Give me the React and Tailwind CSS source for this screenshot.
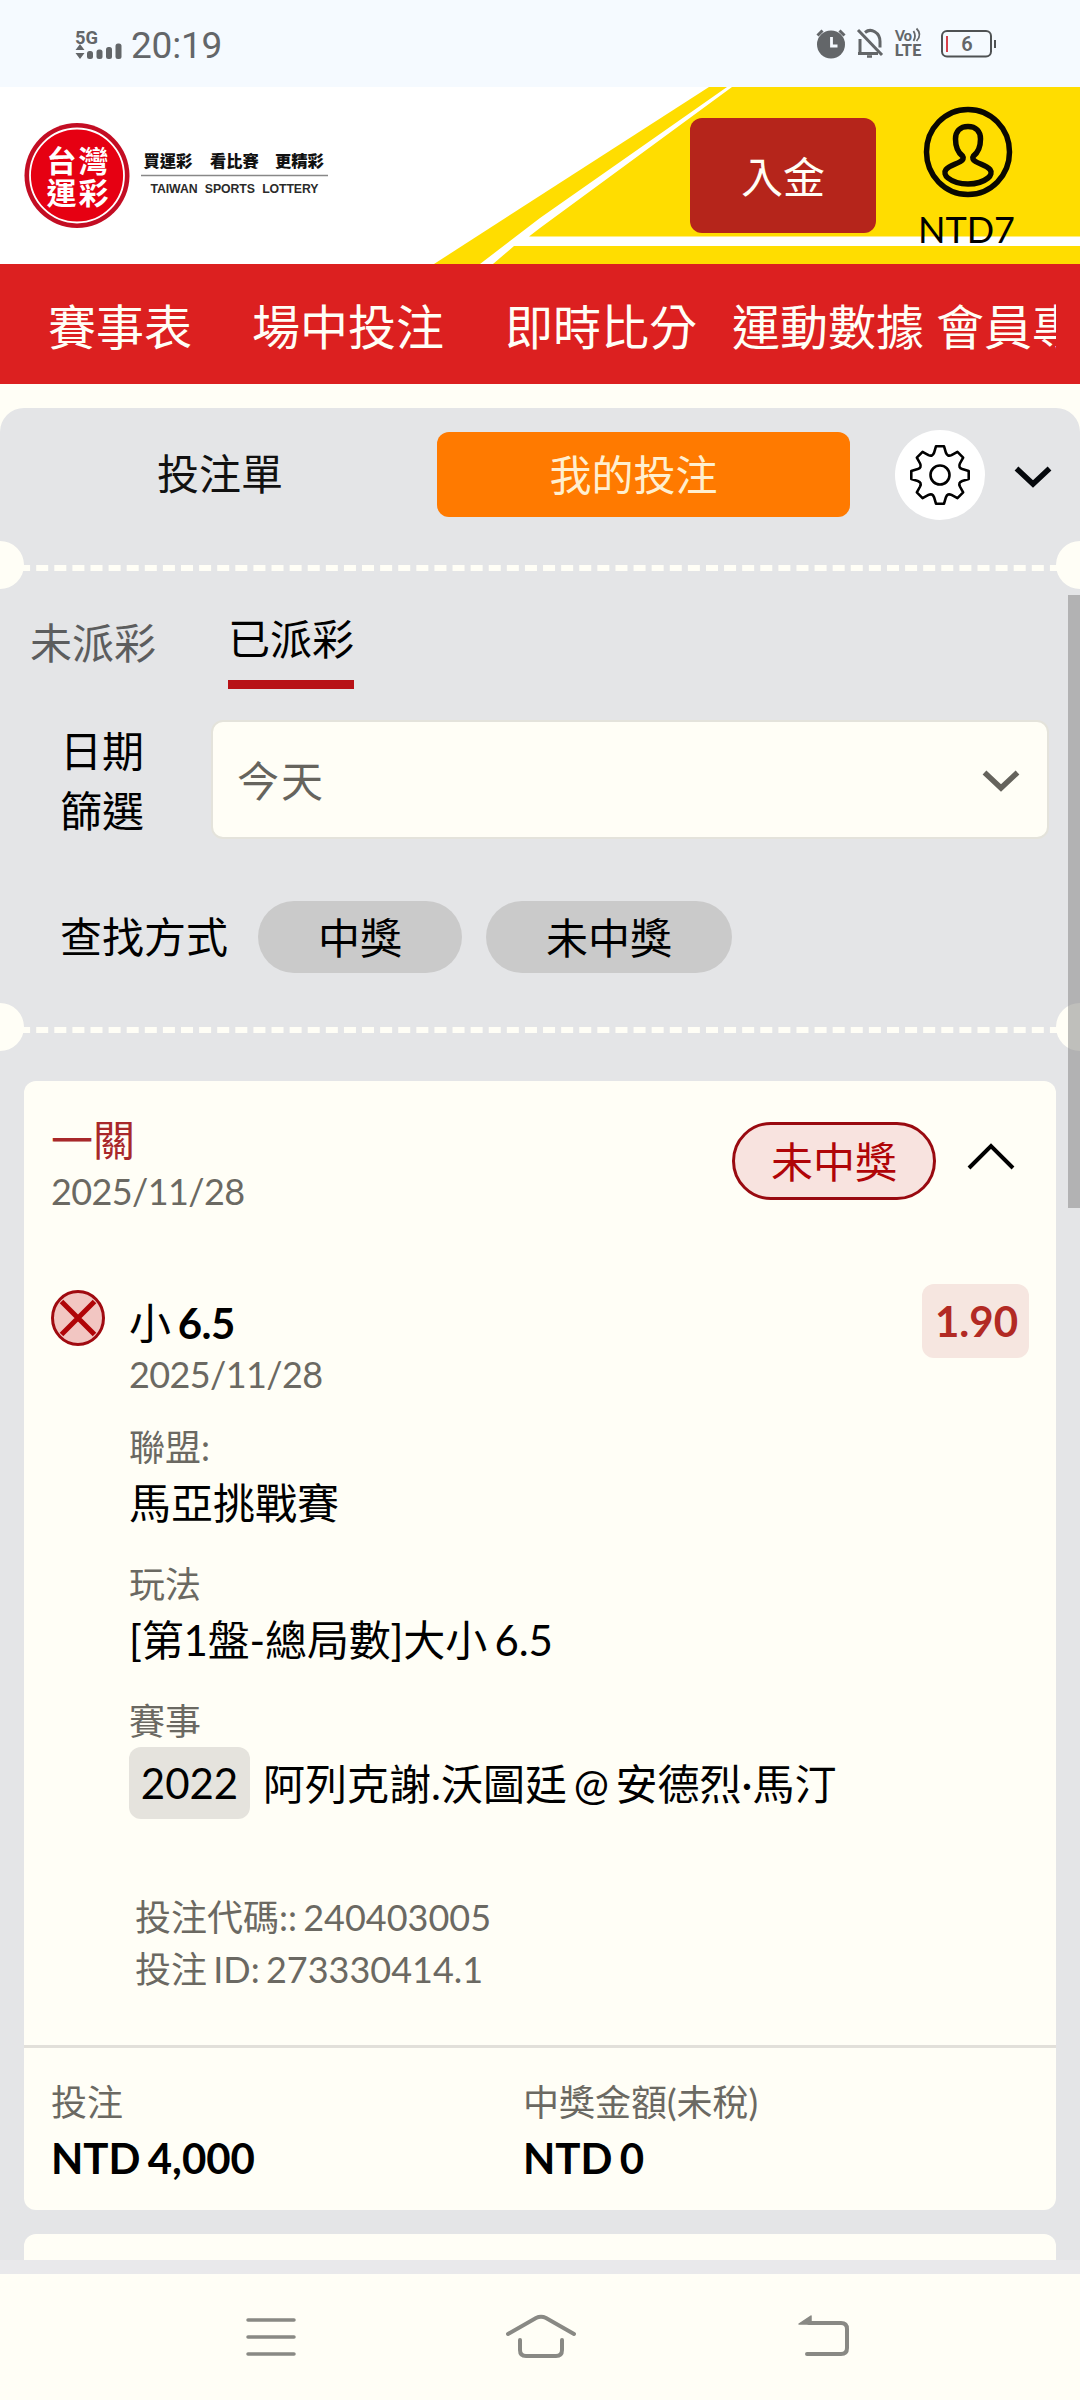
import React from "react";

function SignalIcon() {
  return (
    <svg width="48" height="34" viewBox="0 -2 48 34" className="shrink-0" fill="#636669">
      <text x="0" y="14.5" fontFamily="Roboto" fontWeight="700" fontSize="18.5" textLength="23" lengthAdjust="spacingAndGlyphs">5G</text>
      <path d="M5 15l4.5 6h-9zM5 30l4.5-6h-9z" />
      <rect x="12" y="22" width="6" height="8" rx="2.5" />
      <rect x="21.5" y="20.5" width="6" height="9.5" rx="2.5" />
      <rect x="31" y="18" width="6" height="12" rx="2.5" />
      <rect x="40.5" y="14.5" width="6" height="15.5" rx="2.5" />
    </svg>
  );
}

function StatusIcons() {
  return (
    <svg width="182" height="34" viewBox="0 0 182 34" className="shrink-0">
      <g transform="translate(0 1)">
        <circle cx="15" cy="16.5" r="14" fill="#636669" />
        <path d="M15.5 9v9h6" fill="none" stroke="#f5faff" strokeWidth="2.8" />
        <path d="M1.5 7.5l5-5M28.500 7.500l-5-5" stroke="#636669" strokeWidth="3" />
      </g>
      <g fill="none" stroke="#636669" strokeWidth="3">
        <path d="M42 3l24 25" />
        <path d="M44 12v14M42 26.500h20" />
        <path d="M49 5.500c6-5 15 0 15 9v6" />
        <path d="M51 29.500h5" strokeWidth="2.5" />
      </g>
      <g fill="#636669" fontFamily="Lato" fontWeight="900">
        <text x="79" y="14" fontSize="14.5" textLength="17" lengthAdjust="spacingAndGlyphs">Vo</text>
        <text x="78.500" y="29" fontSize="16.500" textLength="27" lengthAdjust="spacingAndGlyphs">LTE</text>
      </g>
      <path d="M97.500 4q3 5 0 10M100.500 1.500q6 6 0 12.500" fill="none" stroke="#636669" strokeWidth="1.8" />
      <rect x="126" y="4" width="49" height="25.500" rx="5" fill="none" stroke="#4f5254" strokeWidth="2" />
      <path d="M179 13v8" stroke="#4f5254" strokeWidth="2" />
      <path d="M131 9v16" stroke="#d8404a" strokeWidth="2" />
      <text x="151" y="24" textAnchor="middle" fontFamily="Roboto" fontWeight="600" fontSize="20" fill="#636669">6</text>
    </svg>
  );
}

function Logo() {
  return (
    <svg width="310" height="112" viewBox="0 0 310 112" className="shrink-0">
      <ellipse cx="53" cy="54.500" rx="52.500" ry="52.500" fill="#c30d23" />
      <circle cx="53" cy="54.500" r="47" fill="#e60012" stroke="#fff" strokeWidth="1.8" />
      <g fill="#fff" fontFamily="'Noto Sans CJK TC'" fontWeight="700" fontSize="30" letterSpacing="2">
        <text x="22.500" y="50.500">台灣</text>
        <text x="22.500" y="83">運彩</text>
      </g>
      <g fill="#111" fontFamily="'Noto Sans CJK TC'" fontWeight="900" fontSize="16.300">
        <text x="119.500" y="46">買運彩</text>
        <text x="186" y="46">看比賽</text>
        <text x="251" y="46">更精彩</text>
      </g>
      <path d="M117 54.500h187" stroke="#888" strokeWidth="1.500" />
      <text x="126.500" y="71.500" fontFamily="'Liberation Sans'" fontWeight="700" fontSize="12.300" fill="#2a2a2a" wordSpacing="4" textLength="168">TAIWAN SPORTS LOTTERY</text>
    </svg>
  );
}

function HeaderBackdrop() {
  return (
    <svg width="1080" height="177" viewBox="0 0 1080 177" className="absolute inset-0">
      <path d="M709 0H1080V177H434z" fill="#ffdd00" />
      <path d="M727 0L540 131L480 177H493L514 159H1080V149.500H529L540 141L732 0z" fill="#fff" />
    </svg>
  );
}

function UserIcon() {
  return (
    <svg width="90" height="92" viewBox="0 0 90 92" fill="none" stroke="#0a0800" strokeWidth="5.500">
      <ellipse cx="45" cy="46" rx="41.500" ry="42.500" />
      <path d="M45 20.500c-8 0-12.500 5-12.500 12.500 0 8 2 13 7 17 1.500 2 .5 4-2 5.500-5 3-11 4-14.500 8-2 2.500-1 6 2 8.500 5 4 12 6 20 6s15-2 20-6c3-2.500 4-6 2-8.500-3.500-4-9.500-5-14.500-8-2.500-1.500-3.500-3.500-2-5.500 5-4 7-9 7-17 0-7.500-4.500-12.500-12.500-12.500z" />
    </svg>
  );
}

const polar = (deg, r) => {
  const a = ((deg - 90) * Math.PI) / 180;
  return `${(32 + r * Math.cos(a)).toFixed(2)} ${(32 + r * Math.sin(a)).toFixed(2)}`;
};

const gearPath =
  Array.from({ length: 8 }, (_, k) => {
    const c = k * 45;
    return `${k === 0 ? "M" : "L"}${polar(c - 8, 29)}L${polar(c + 8, 29)}L${polar(c + 15, 23)}Q${polar(c + 22.5, 19.5)} ${polar(c + 30, 23)}`;
  }).join("") + "Z";

function GearIcon() {
  return (
    <svg width="64" height="64" viewBox="0 0 64 64" fill="none" stroke="#000" strokeWidth="2.600" strokeLinejoin="round">
      <path d={gearPath} />
      <circle cx="32" cy="32" r="9.500" />
    </svg>
  );
}

function ChevronDown({ color }) {
  return (
    <svg width="38" height="24" viewBox="0 0 38 24" fill="none" stroke={color} strokeWidth="5.500" className="shrink-0">
      <path d="M2.500 3.500L19 19L35.500 3.500" />
    </svg>
  );
}

function Perforation() {
  return (
    <div className="relative h-[6px]">
      <div className="border-t-[6px] border-dashed border-[#fffef6]" />
      <div className="absolute -left-6 -top-6 size-12 rounded-full bg-[#fffef6]" />
      <div className="absolute -right-6 -top-6 size-12 rounded-full bg-[#fffef6]" />
    </div>
  );
}

function Field({ label, children }) {
  return (
    <div className="mb-[26px]">
      <div className="h-[56px] text-[36px] leading-[54px] text-[#6b6962]">{label}</div>
      <div className="flex h-[55px] items-center text-[42px] leading-[55px]">{children}</div>
    </div>
  );
}

function BetCard() {
  return (
    <article className="mx-6 h-[1129px] rounded-[12px] bg-[#fffef6] [word-spacing:-3px]">
      <header className="flex h-[192px] justify-between pl-[27px] pr-[41px]">
        <div className="pt-[29px]">
          <div className="text-[42px] leading-[60px] text-[#a8282a]">一關</div>
          <div className="text-[36px] leading-[42px] tracking-[-0.6px] text-[#6b6962]">2025/11/28</div>
        </div>
        <div className="mt-[41px] flex h-[78px] items-center gap-[31px]">
          <div className="flex h-[78px] w-[204px] items-center justify-center rounded-full border-[3px] border-[#990a10] bg-[#f8e3df] pt-[2px] text-[42px] leading-none text-[#b00508]">未中獎</div>
          <svg width="48" height="30" viewBox="0 0 48 30" fill="none" stroke="#000" strokeWidth="4" className="mb-[10px]">
            <path d="M2 27L24 5L46 27" />
          </svg>
        </div>
      </header>

      <div className="flex h-[772px] pl-[27px] pr-[27px]">
        <svg width="54" height="56" viewBox="0 0 54 56" className="mt-[17px] shrink-0">
          <ellipse cx="27" cy="28" rx="25.500" ry="26.500" fill="#f2c6c2" stroke="#a00a10" strokeWidth="3" />
          <path d="M10.500 11.500L43.500 44.500M43.500 11.500L10.500 44.500" stroke="#b00508" strokeWidth="5" />
        </svg>
        <div className="ml-[24px] flex-1 pt-[20px]">
          <div className="text-[42px] leading-[60px]">小<span className="font-bold tracking-[-0.5px]"> 6.5</span></div>
          <div className="h-[45px] text-[36px] leading-[43px] tracking-[-0.6px] text-[#6b6962]">2025/11/28</div>
          <div className="h-[22px]" />
          <Field label="聯盟:">馬亞挑戰賽</Field>
          <Field label="玩法"><span className="whitespace-nowrap tracking-[-0.15px]">[第1盤-總局數]大小 6.5</span></Field>
          <div className="h-[54px] text-[36px] leading-[54px] text-[#6b6962]">賽事</div>
          <div className="-mt-[1px] flex h-[72px] items-center text-[42px]">
            <span className="mr-[13px] flex h-[72px] w-[121px] items-center justify-center rounded-[12px] bg-[#e5e3dd] leading-none">2022</span>
            <span className="whitespace-nowrap leading-[72px] [word-spacing:-4px] pt-[2px]">阿列克謝.沃圖廷 @ 安德烈·馬汀</span>
          </div>
          <div className="ml-[6px] mt-[72px] text-[36px] leading-[52px] text-[#6b6962]">
            <div>投注代碼:: 240403005</div>
            <div>投注 ID: 273330414.1</div>
          </div>
        </div>
        <div className="mt-[11px] flex h-[74px] w-[107px] items-center justify-center rounded-[12px] bg-[#f6e6e0] pl-[2px] text-[42px] font-bold leading-none text-[#b22a24]">1.90</div>
      </div>

      <footer className="flex border-t-[3px] border-[#e2e0da] pl-[27px] pt-[27px]">
        <div className="w-[472px]">
          <div className="text-[36px] leading-[54px] text-[#6b6962]">投注</div>
          <div className="text-[42px] font-bold leading-[59px]">NTD 4,000</div>
        </div>
        <div>
          <div className="text-[36px] leading-[54px] text-[#6b6962]">中獎金額(未稅)</div>
          <div className="text-[42px] font-bold leading-[59px]">NTD 0</div>
        </div>
      </footer>
    </article>
  );
}

export default function App() {
  return (
    <div className="h-[2400px] w-[1080px] overflow-hidden bg-[#fffef6] font-['Lato','Noto_Sans_CJK_TC',sans-serif] text-black">
      <div className="flex h-[87px] items-center justify-between bg-[#f5faff] pl-[75px] pr-[82px]">
        <div className="flex items-center">
          <SignalIcon />
          <span className="ml-[8px] mt-[4px] font-['Roboto'] text-[37px] leading-none tracking-[-0.2px] text-[#636669]">20:19</span>
        </div>
        <StatusIcons />
      </div>

      <header className="relative h-[177px] bg-white">
        <HeaderBackdrop />
        <div className="relative flex h-full">
          <div className="ml-[24px] mt-[34px]">
            <Logo />
          </div>
          <button className="ml-[356px] mt-[31px] flex h-[115px] w-[186px] items-center justify-center rounded-[12px] bg-[#b5251b] pt-[2px] text-[42px] leading-none text-[#fffef6]">入金</button>
          <div className="ml-[43px] mt-[19px] flex w-[98px] flex-col items-center">
            <UserIcon />
            <span className="mr-[3px] mt-[10px] text-[36px] leading-[42px]">NTD7</span>
          </div>
        </div>
      </header>

      <nav className="h-[120px] bg-[#dc2020] px-6">
        <div className="flex h-full items-center overflow-hidden whitespace-nowrap pl-6 pt-[6px] text-[48px] leading-[120px] text-[#fffef6]">
          <span className="mr-[60px] shrink-0">賽事表</span>
          <span className="mr-[61px] shrink-0">場中投注</span>
          <span className="mr-[35px] shrink-0">即時比分</span>
          <span className="mr-[12px] shrink-0">運動數據</span>
          <span className="shrink-0">會員專區</span>
        </div>
      </nav>

      <main className="relative mt-6 h-[1866px] overflow-hidden rounded-t-[24px] bg-[#e4e5e7]">
        <div className="flex h-[157px] items-start pt-[24px]">
          <div className="flex h-[85px] w-[437px] items-center justify-center pl-[3px] text-[42px] leading-[87px] text-[#111]">投注單</div>
          <div className="flex h-[85px] w-[413px] justify-center rounded-[12px] bg-[#ff7a00] pr-[20px] text-[42px] leading-[87px] text-[#ffefcf]">我的投注</div>
          <div className="-mt-[2px] ml-[45px] flex size-[90px] items-center justify-center rounded-full bg-white">
            <GearIcon />
          </div>
          <div className="ml-[29px] mt-[33px]">
            <ChevronDown color="#05080c" />
          </div>
        </div>
        <Perforation />

        <div className="flex h-[118px] pl-[30px]">
          <div className="w-[198px] text-[42px] leading-[145px] text-[#5c5d5e]">未派彩</div>
          <div className="h-[118px] border-b-[9px] border-[#b81116] text-[42px] leading-[136px]">已派彩</div>
        </div>

        <div className="mt-[31px] flex h-[119px] pl-[60px]">
          <div className="w-[151px] pt-[1px] text-[42px] leading-[60px]">
            <div>日期</div>
            <div>篩選</div>
          </div>
          <div className="flex h-[119px] w-[838px] items-center justify-between rounded-[12px] border-[2px] border-[#e4e3db] bg-[#fffef6] pl-[24px] pr-[27px]">
            <span className="pt-[3px] text-[42px] leading-none tracking-[2px] text-[#66645d]">今天</span>
            <div className="pt-[2px]">
              <ChevronDown color="#65635c" />
            </div>
          </div>
        </div>

        <div className="mt-[62px] flex h-[72px] items-center pl-[60px] text-[42px] leading-[74px]">
          <span className="mr-[30px]">查找方式</span>
          <span className="mr-6 flex h-[72px] w-[204px] justify-center rounded-full bg-[#cacaca]">中獎</span>
          <span className="flex h-[72px] w-[246px] justify-center rounded-full bg-[#cacaca]">未中獎</span>
        </div>

        <div className="h-[54px]" />
        <Perforation />
        <div className="h-[48px]" />

        <BetCard />
        <div className="mx-6 mt-6 h-[26px] rounded-t-[12px] bg-[#fffef6]" />
        <div className="h-[14px] bg-[#e9e9eb]" />
        <div className="absolute right-0 top-[187px] h-[613px] w-[12px] bg-[#7f7f7f]/50" />
      </main>

      <div className="flex h-[126px] items-start pl-[246px] pt-[39px]">
        <svg width="50" height="46" viewBox="0 0 50 46" stroke="#898984" strokeWidth="3.500" strokeLinecap="round">
          <path d="M2 7h46M2 24h46M2 41h46" />
        </svg>
        <svg width="72" height="46" viewBox="0 0 72 46" fill="none" stroke="#898984" strokeWidth="4" strokeLinecap="round" className="ml-[209px]">
          <path d="M3 21L31 5q5-2.500 10 0L69 21" />
          <path d="M15 27v10q0 6 6 6h30q6 0 6-6V27" />
        </svg>
        <svg width="54" height="46" viewBox="0 0 54 46" fill="none" stroke="#898984" strokeWidth="4" strokeLinecap="round" className="ml-[220px]">
          <path d="M12 10h32q6 0 6 6v19q0 6-6 6H10" />
          <path d="M14 3v8H2z" fill="#898984" strokeWidth="1.500" strokeLinejoin="round" />
        </svg>
      </div>
    </div>
  );
}
